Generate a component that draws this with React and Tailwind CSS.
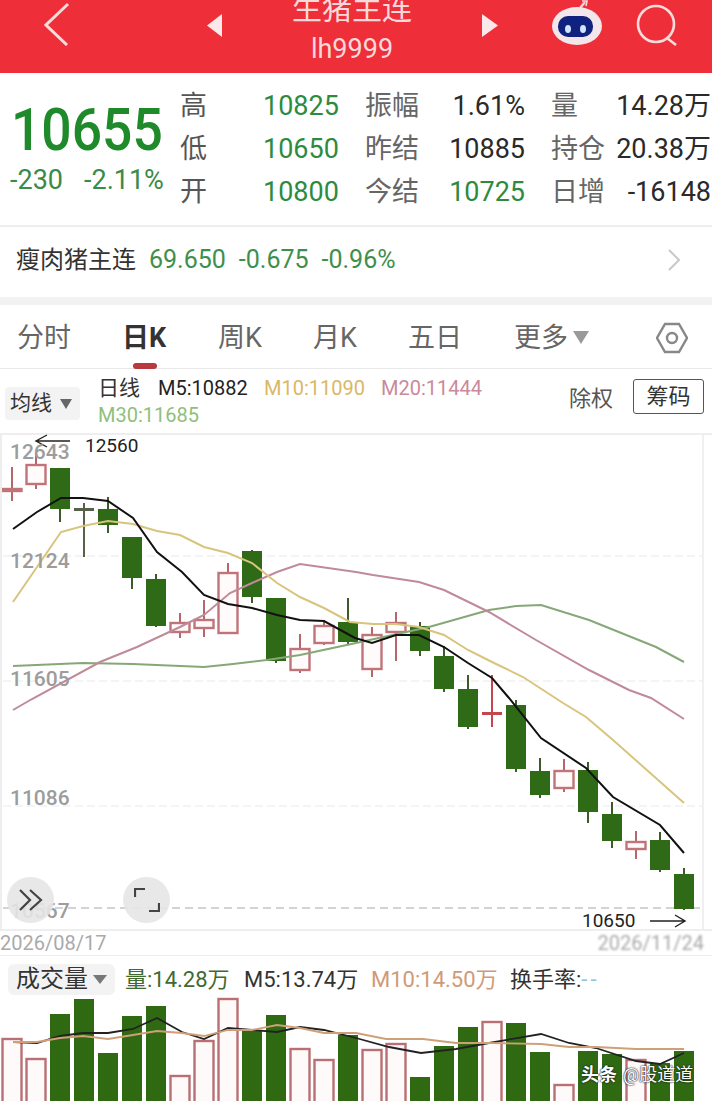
const FONT = "font-['Roboto','Noto_Sans_CJK_SC',sans-serif]";

// x center, body top, body bottom, wick top, wick bottom, type
const candles = [
  [12, 489, 491, 467, 501, "r"],
  [36, 465, 484, 453, 489, "r"],
  [60, 468, 509, 468, 522, "g"],
  [84, 508, 510, 503, 557, "d"],
  [108, 509, 525, 497, 533, "g"],
  [132, 537, 578, 537, 589, "g"],
  [156, 579, 626, 574, 627, "g"],
  [180, 623, 632, 613, 638, "r"],
  [204, 620, 628, 600, 637, "r"],
  [228, 573, 633, 563, 633, "r"],
  [252, 551, 597, 550, 603, "g"],
  [276, 598, 661, 598, 663, "g"],
  [300, 649, 670, 634, 673, "r"],
  [324, 626, 643, 620, 645, "r"],
  [348, 622, 642, 598, 645, "g"],
  [372, 635, 669, 627, 677, "r"],
  [396, 623, 632, 612, 661, "r"],
  [420, 626, 651, 622, 656, "g"],
  [444, 656, 689, 646, 692, "g"],
  [468, 689, 727, 675, 729, "g"],
  [492, 712, 714, 675, 727, "x"],
  [516, 705, 769, 700, 772, "g"],
  [540, 771, 795, 758, 798, "g"],
  [564, 771, 788, 759, 792, "r"],
  [588, 770, 812, 762, 823, "g"],
  [612, 814, 841, 802, 848, "g"],
  [636, 842, 849, 831, 859, "r"],
  [660, 840, 870, 832, 872, "g"],
  [684, 874, 909, 868, 910, "g"],
];

const m5 = "13,529 37,512 61,498 83,498 108,501 133,518 157,552 182,572 204,595 228,604 252,608 277,615 300,620 324,621 355,638 372,643 396,635 419,635 444,647 468,663 492,678 509,698 541,738 586,768 613,797 660,825 684,853";
const m10 = "13,602 61,532 83,526 108,521 133,524 157,531 180,535 204,547 228,553 252,563 277,583 300,597 324,608 350,622 373,624 396,624 419,627 444,635 468,650 492,662 523,677 543,690 563,703 586,717 613,740 684,803";
const m20 = "13,710 32,699 100,662 137,647 180,627 204,615 230,593 252,583 277,572 300,564 356,572 373,575 419,582 444,590 489,612 536,640 589,670 629,690 651,698 684,719";
const m30 = "13,666 83,663 133,664 204,667 233,664 267,660 300,655 356,643 429,627 489,610 516,606 541,605 589,620 656,647 684,662";

const volumes = [
  [12, 1039, "r"], [36, 1059, "r"], [60, 1014, "g"], [84, 999, "g"], [108, 1053, "g"],
  [132, 1016, "g"], [156, 1006, "g"], [180, 1076, "r"], [204, 1041, "r"], [228, 999, "r"],
  [252, 1030, "g"], [276, 1015, "g"], [300, 1049, "r"], [324, 1060, "r"], [348, 1035, "g"],
  [372, 1050, "r"], [396, 1044, "r"], [420, 1077, "g"], [444, 1046, "g"], [468, 1027, "g"],
  [492, 1022, "r"], [516, 1023, "g"], [540, 1052, "g"], [564, 1085, "r"], [588, 1051, "g"],
  [612, 1054, "g"], [636, 1060, "r"], [660, 1063, "g"], [684, 1051, "g"],
];

const volM5 = "13,1042 37,1043 60,1036 83,1033 108,1033 133,1029 157,1018 182,1032 204,1039 228,1028 252,1030 277,1032 300,1027 324,1030 356,1038 389,1047 421,1053 456,1049 489,1043 541,1034 569,1043 596,1048 636,1061 660,1064 684,1053";
const volM10 = "13,1042 37,1042 60,1038 83,1036 108,1039 133,1035 157,1031 182,1033 204,1036 228,1030 252,1030 277,1025 300,1028 324,1033 356,1033 386,1039 423,1039 456,1043 489,1043 541,1044 569,1047 596,1047 636,1049 684,1049";

const rows = [
  ["高", "10825", "振幅", "1.61%", false, "量", "14.28万"],
  ["低", "10650", "昨结", "10885", false, "持仓", "20.38万"],
  ["开", "10800", "今结", "10725", true, "日增", "-16148"],
];

const tabs = [
  ["分时", "w-[105px]"],
  ["日K", "w-[96px]"],
  ["周K", "w-[95px]"],
  ["月K", "w-[95px]"],
  ["五日", "w-[106px]"],
];

const priceLabels = [
  ["12643", "top-[5px]"],
  ["12124", "top-[114px]"],
  ["11605", "top-[232px]"],
  ["11086", "top-[351px]"],
  ["10567", "top-[464px]"],
];

function Candle({ c }) {
  const [x, top, bottom, wickTop, wickBottom, type] = c;
  if (type === "g") {
    return (
      <g>
        <line x1={x} x2={x} y1={wickTop} y2={wickBottom} stroke="#3d5a28" strokeWidth="2" />
        <rect x={x - 10} y={top} width="20" height={bottom - top} fill="#2f6a16" />
      </g>
    );
  }
  if (type === "d" || type === "x") {
    const color = type === "d" ? "#56604a" : "#c4474f";
    return (
      <g>
        <line x1={x} x2={x} y1={wickTop} y2={wickBottom} stroke={color} strokeWidth="2" />
        <rect x={x - 10} y={top} width="20" height={bottom - top + 1} fill={color} />
      </g>
    );
  }
  return (
    <g>
      <line x1={x} x2={x} y1={wickTop} y2={top} stroke="#b5666b" strokeWidth="2" />
      <line x1={x} x2={x} y1={bottom} y2={wickBottom} stroke="#b5666b" strokeWidth="2" />
      <rect x={x - 9.5} y={top} width="19" height={bottom - top} fill="#fffbfa" stroke="#c0747a" strokeWidth="2.4" />
    </g>
  );
}

function PriceChart() {
  return (
    <svg viewBox="0 433 712 496" className="absolute -top-[2px] left-0 h-[496px] w-[712px]">
      <line x1="3" x2="703" y1="556" y2="556" stroke="#e9e9e9" strokeWidth="1" strokeDasharray="8 4" />
      <line x1="3" x2="703" y1="681" y2="681" stroke="#e9e9e9" strokeWidth="1" strokeDasharray="8 4" />
      <line x1="3" x2="703" y1="806" y2="806" stroke="#e9e9e9" strokeWidth="1" strokeDasharray="8 4" />
      <line x1="3" x2="703" y1="908" y2="908" stroke="#a8a8a8" strokeWidth="1.2" strokeDasharray="8 5" />
      {candles.map((c) => (
        <Candle key={c[0]} c={c} />
      ))}
      <polyline points={m30} fill="none" stroke="#86a878" strokeWidth="2" />
      <polyline points={m20} fill="none" stroke="#c08a98" strokeWidth="2" />
      <polyline points={m10} fill="none" stroke="#d8c47c" strokeWidth="2" />
      <polyline points={m5} fill="none" stroke="#111" strokeWidth="2" />
      <path d="M70 441H37M47 435l-11 6 11 6" fill="none" stroke="#222" strokeWidth="1.4" />
      <path d="M650 921h34M675 915l10 6-10 6" fill="none" stroke="#222" strokeWidth="1.4" />
    </svg>
  );
}

function VolumeChart() {
  return (
    <svg viewBox="0 996 712 105" className="absolute inset-0 h-[105px] w-[712px]">
      {volumes.map(([x, top, type]) =>
        type === "g" ? (
          <rect key={x} x={x - 10} y={top} width="20" height={1101 - top + 4} fill="#2f6a12" />
        ) : (
          <rect key={x} x={x - 9.5} y={top} width="19" height={1101 - top + 4} fill="#fffafa" stroke="#b96f73" strokeWidth="2.4" />
        ),
      )}
      <polyline points={volM5} fill="none" stroke="#222" strokeWidth="1.8" />
      <polyline points={volM10} fill="none" stroke="#cf9f78" strokeWidth="1.8" />
    </svg>
  );
}

function Header() {
  return (
    <div className="flex h-[73px] items-start overflow-hidden bg-[#ee2f3a]">
      <svg viewBox="0 0 26 44" className="mt-[2px] ml-[44px] h-[44px] w-[26px]" fill="none" stroke="#f8dcdc" strokeWidth="3">
        <path d="M24 2 2 23l21 20" />
      </svg>
      <svg viewBox="0 0 15 23" className="mt-[14px] ml-[137px] h-[23px] w-[15px]" fill="#fbe9e9">
        <path d="M15 0v23L0 11.5z" />
      </svg>
      <div className="flex w-[260px] flex-col items-center text-[#f9d9d9]">
        <div className="-mt-[6px] h-[30px] text-[30px] leading-[30px]">生猪主连</div>
        <div className="mt-[10px] text-[27px] leading-[30px]">lh9999</div>
      </div>
      <svg viewBox="0 0 16 23" className="mt-[14px] h-[23px] w-[16px]" fill="#fbe9e9">
        <path d="M0 0v23l16-11.5z" />
      </svg>
      <svg viewBox="0 0 50 46" className="ml-[54px] h-[46px] w-[50px]">
        <path d="M28 8 33 2" stroke="#f4d8d8" strokeWidth="2.4" fill="none" />
        <path d="M30 1h5l-1 5" stroke="#f4d8d8" strokeWidth="1.6" fill="none" />
        <ellipse cx="25" cy="26" rx="25" ry="19" fill="#f2e6ea" />
        <rect x="6" y="16" width="35" height="21" rx="10" fill="#10217f" />
        <ellipse cx="16" cy="29" rx="3" ry="4" fill="#cfe6fb" />
        <ellipse cx="31" cy="29" rx="3" ry="4" fill="#cfe6fb" />
      </svg>
      <svg viewBox="0 0 42 46" className="ml-[34px] h-[46px] w-[42px]" fill="none" stroke="#f8dcdc" strokeWidth="2.6">
        <circle cx="20" cy="24" r="18" />
        <path d="m31 38 9 7" />
      </svg>
    </div>
  );
}

function Quote() {
  return (
    <div className="flex h-[152px]">
      <div className="w-[180px] shrink-0 pt-[27px]">
        <div className="ml-[11px] h-[60px] origin-left scale-x-[0.89] text-[60px] leading-[60px] font-medium text-[#1f8a2a]">
          10655
        </div>
        <div className="mt-[5px] ml-[10px] flex text-[27px] leading-[30px] text-[#3a8a48]">
          <span className="w-[74px]">-230</span>
          <span>-2.11%</span>
        </div>
      </div>
      <div className="mt-[12px] grid h-[129px] flex-1 grid-cols-[83px_102px_80px_106px_61px_100px] grid-rows-[43px_43px_43px] text-[27px] leading-[43px] whitespace-nowrap">
        {rows.map(([a, b, c, d, dGreen, e, f]) => (
          <div key={a} className="contents">
            <span className="text-[#555]">{a}</span>
            <span className="text-[#2e8b3e]">{b}</span>
            <span className="text-[#666]">{c}</span>
            <span className={`pr-[26px] text-right ${dGreen ? "text-[#2e8b3e]" : "text-[#2a2a2a]"}`}>{d}</span>
            <span className="text-[#666]">{e}</span>
            <span className="pr-[1px] text-right text-[#2a2a2a]">{f}</span>
          </div>
        ))}
      </div>
    </div>
  );
}

function LeanHog() {
  return (
    <div className="flex h-[72px] items-center border-t-2 border-[#eeeeee] pb-[5px] pl-[16px]">
      <span className="text-[24px] text-[#333]">瘦肉猪主连</span>
      <span className="ml-[13px] flex gap-[13px] text-[25px] text-[#3f8f4c]">
        <span>69.650</span>
        <span>-0.675</span>
        <span>-0.96%</span>
      </span>
      <svg viewBox="0 0 12 22" className="mr-[32px] ml-auto h-[22px] w-[12px]" fill="none" stroke="#c9c9c9" strokeWidth="2">
        <path d="m1 1 10 10L1 21" />
      </svg>
    </div>
  );
}

function Tabs() {
  return (
    <div className="relative flex h-[64px] items-start border-b border-[#e8e8e8] pt-[16px] pl-[17px] text-[27px] leading-[34px] text-[#666]">
      {tabs.map(([label, width], i) => (
        <span key={label} className={`${width} ${i === 1 ? "font-bold text-[#333]" : ""}`}>
          {label}
        </span>
      ))}
      <span>更多</span>
      <svg viewBox="0 0 16 13" className="mt-[10px] ml-[5px] h-[13px] w-[16px]" fill="#9a9a9a">
        <path d="M0 0h16L8 13z" />
      </svg>
      <svg viewBox="0 0 32 32" className="absolute top-[17px] left-[656px] h-[32px] w-[32px]" fill="none" stroke="#888" strokeWidth="2.4">
        <path d="M9 2h14l8 14-8 14H9L1 16z" />
        <circle cx="16" cy="16" r="5" />
      </svg>
      <div className="absolute top-[58px] left-[133px] h-[6px] w-[24px] rounded-full bg-[#b8393f]" />
    </div>
  );
}

function Indicators() {
  return (
    <div className="flex h-[64px] items-start">
      <div className="mt-[18px] ml-[5px] flex h-[33px] w-[75px] items-center rounded-sm bg-[#f3f3f3] pl-[5px] text-[21px] text-[#333]">
        均线
        <svg viewBox="0 0 12 10" className="ml-[8px] h-[10px] w-[12px]" fill="#666">
          <path d="M0 0h12L6 10z" />
        </svg>
      </div>
      <div className="mt-[6px] ml-[18px] w-[400px] text-[20px] leading-[27px]">
        <div className="flex whitespace-nowrap">
          <span className="w-[60px] text-[21px] text-[#333]">日线</span>
          <span className="w-[106px] text-[#222]">M5:10882</span>
          <span className="w-[117px] text-[#d9b866]">M10:11090</span>
          <span className="text-[#c98a9a]">M20:11444</span>
        </div>
        <div className="text-[#8fbf7a]">M30:11685</div>
      </div>
      <span className="mt-[15px] ml-[71px] text-[22px] leading-[30px] text-[#555]">除权</span>
      <span className="mt-[10px] ml-[20px] flex h-[35px] w-[71px] items-center justify-center rounded-[3px] border border-[#555] text-[22px] text-[#333]">
        筹码
      </span>
    </div>
  );
}

function RoundButton({ className, children }) {
  return (
    <div className={`absolute top-[442px] flex h-[46px] w-[47px] items-center justify-center rounded-full bg-[#e6e6e6]/90 ${className}`}>
      {children}
    </div>
  );
}

function ChartPanel() {
  return (
    <div className="relative h-[496px] border-t-2 border-[#eeeeee]">
      <PriceChart />
      <div className="absolute top-0 right-[8px] bottom-0 w-[2px] bg-[#f0f0f0]" />
      <div className="absolute top-0 bottom-0 left-0 w-[2px] bg-[#eeeeee]" />
      {priceLabels.map(([label, top]) => (
        <span key={label} className={`absolute left-[10px] text-[21px] leading-[24px] font-medium text-[#9c9c9c] ${top}`}>
          {label}
        </span>
      ))}
      <span className="absolute -top-[1px] left-[85px] text-[19px] leading-[24px] text-[#222]">12560</span>
      <span className="absolute top-[474px] left-[582px] text-[19px] leading-[24px] text-[#222]">10650</span>
      <RoundButton className="left-[7px]">
        <svg viewBox="0 0 24 22" className="h-[22px] w-[24px]" fill="none" stroke="#444" strokeWidth="2.2">
          <path d="m1 1 10 10L1 21M11 1l11 10-11 10" />
        </svg>
      </RoundButton>
      <RoundButton className="left-[123px]">
        <svg viewBox="0 0 26 24" className="h-[24px] w-[26px]" fill="none" stroke="#444" strokeWidth="2.2">
          <path d="M1 9V1h10M25 15v8H15" />
        </svg>
      </RoundButton>
    </div>
  );
}

function DateRow() {
  return (
    <div className="flex h-[27px] items-center justify-between border-t-2 border-b border-[#eeeeee] pr-[8px] text-[20px] text-[#aaa]">
      <span>2026/08/17</span>
      <span className="blur-[1.2px]">2026/11/24</span>
    </div>
  );
}

function VolumePanel() {
  return (
    <>
      <div className="flex h-[40px] items-start pt-[8px] text-[22px] leading-[31px] whitespace-nowrap">
        <div className="ml-[8px] flex h-[31px] w-[107px] items-center rounded-md bg-[#f3f3f3] pl-[8px] text-[24px] text-[#333]">
          成交量
          <svg viewBox="0 0 14 9" className="ml-[5px] h-[9px] w-[14px]" fill="#777">
            <path d="M0 0h14L7 9z" />
          </svg>
        </div>
        <span className="ml-[10px] w-[119px] text-[#3f6a30]">量:14.28万</span>
        <span className="w-[127px] text-[#333]">M5:13.74万</span>
        <span className="w-[139px] text-[#cf9a78]">M10:14.50万</span>
        <span className="text-[#333]">换手率:</span>
        <span className="text-[22px] tracking-[3px] text-[#8fc7d8]">--</span>
      </div>
      <div className="relative h-[105px] overflow-hidden">
        <VolumeChart />
        <div className="absolute top-[67px] left-[581px] flex items-center gap-[6px] text-[18px] leading-[24px] text-white [text-shadow:0_0_2px_#111,0_0_1px_#111]">
          <span className="font-bold">头条</span>
          <span>@股道道</span>
        </div>
      </div>
    </>
  );
}

export default function App() {
  return (
    <div className={`h-[1101px] w-[712px] overflow-hidden bg-white ${FONT}`}>
      <Header />
      <Quote />
      <LeanHog />
      <div className="h-[8px] bg-[#f2f2f2]" />
      <Tabs />
      <Indicators />
      <ChartPanel />
      <DateRow />
      <VolumePanel />
    </div>
  );
}
